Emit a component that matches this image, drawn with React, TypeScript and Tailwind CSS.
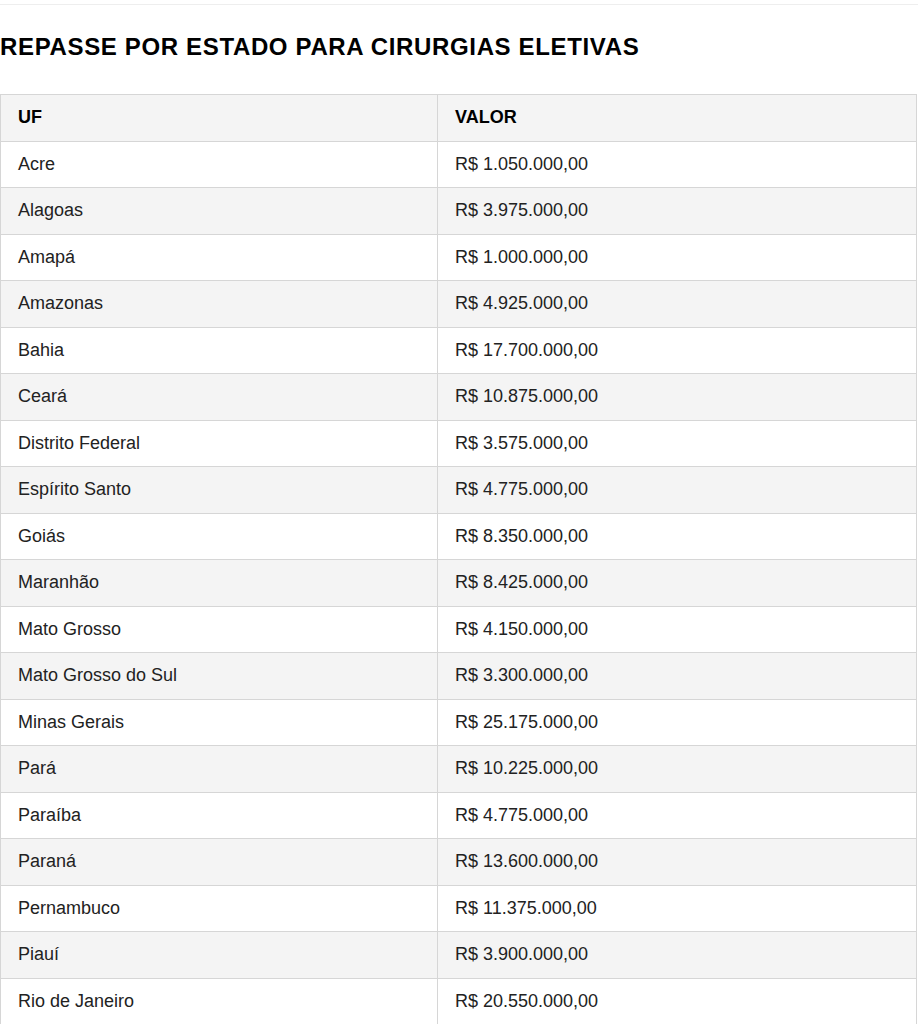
import React from 'react';

const rows: [string, string][] = [
  ['Acre', 'R$ 1.050.000,00'],
  ['Alagoas', 'R$ 3.975.000,00'],
  ['Amapá', 'R$ 1.000.000,00'],
  ['Amazonas', 'R$ 4.925.000,00'],
  ['Bahia', 'R$ 17.700.000,00'],
  ['Ceará', 'R$ 10.875.000,00'],
  ['Distrito Federal', 'R$ 3.575.000,00'],
  ['Espírito Santo', 'R$ 4.775.000,00'],
  ['Goiás', 'R$ 8.350.000,00'],
  ['Maranhão', 'R$ 8.425.000,00'],
  ['Mato Grosso', 'R$ 4.150.000,00'],
  ['Mato Grosso do Sul', 'R$ 3.300.000,00'],
  ['Minas Gerais', 'R$ 25.175.000,00'],
  ['Pará', 'R$ 10.225.000,00'],
  ['Paraíba', 'R$ 4.775.000,00'],
  ['Paraná', 'R$ 13.600.000,00'],
  ['Pernambuco', 'R$ 11.375.000,00'],
  ['Piauí', 'R$ 3.900.000,00'],
  ['Rio de Janeiro', 'R$ 20.550.000,00'],
];

export default function App() {
  return (
    <div className="w-[918px] h-[1024px] overflow-hidden bg-white font-['Liberation_Sans',Arial,sans-serif] text-[#222]">
      <div className="mt-1 h-px bg-[#eeeeee]" />
      <h2 className="mt-[28px] h-[61px] text-[24px] leading-[28px] tracking-[0.65px] font-bold text-black">
        REPASSE POR ESTADO PARA CIRURGIAS ELETIVAS
      </h2>
      <table className="w-[917px] border-collapse table-fixed text-[18px]">
        <colgroup>
          <col className="w-[437px]" />
          <col />
        </colgroup>
        <thead>
          <tr className="h-[46.5px] bg-[#f4f4f4]">
            <th className="border border-[#d6d6d6] px-[17px] text-left font-bold text-black">UF</th>
            <th className="border border-[#d6d6d6] px-[17px] text-left font-bold text-black">VALOR</th>
          </tr>
        </thead>
        <tbody>
          {rows.map(([uf, valor], i) => (
            <tr key={uf} className={`h-[46.5px] ${i % 2 === 1 ? 'bg-[#f4f4f4]' : 'bg-white'}`}>
              <td className="border border-[#d6d6d6] px-[17px]">{uf}</td>
              <td className="border border-[#d6d6d6] px-[17px]">{valor}</td>
            </tr>
          ))}
        </tbody>
      </table>
    </div>
  );
}
